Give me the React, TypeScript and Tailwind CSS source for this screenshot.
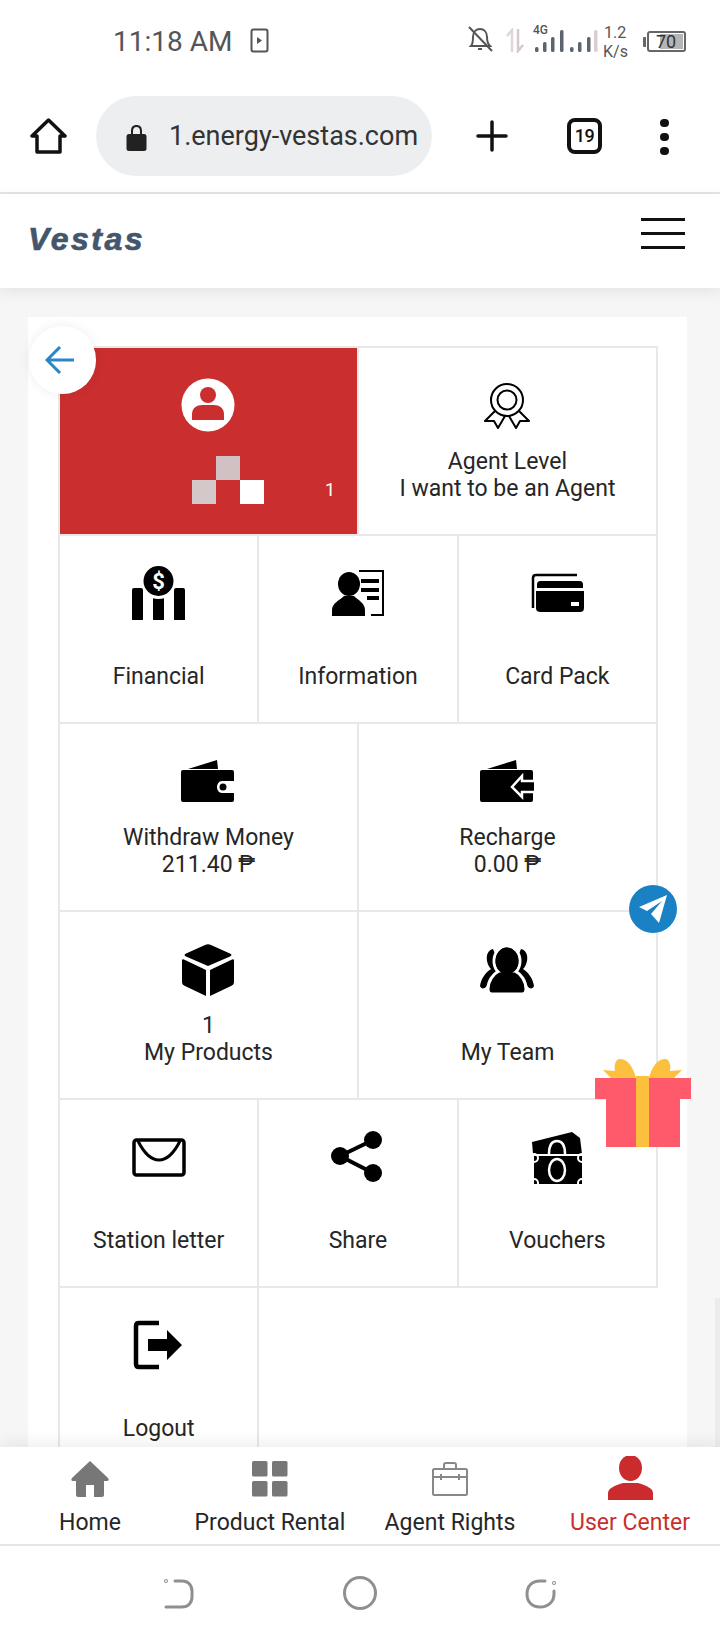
import React from "react";

const S = ({ children, fill = "black" }: { children: React.ReactNode; fill?: string }) => (
  <svg width="54" height="54" viewBox="0 0 54 54" fill={fill}>{children}</svg>
);

const Financial = () => (
  <S>
    <rect x="0" y="22" width="11" height="33" rx="2" />
    <rect x="21" y="31" width="11" height="24" rx="2" />
    <rect x="42" y="22" width="11" height="33" rx="2" />
    <circle cx="26.5" cy="16" r="17" fill="white" />
    <circle cx="26.5" cy="15" r="15" />
    <text x="26.5" y="23" textAnchor="middle" fontSize="22" fontWeight="700" fill="white" fontFamily="Roboto, sans-serif">$</text>
  </S>
);
const Information = () => (
  <S>
    <path d="M28 5H52V49H40" fill="none" stroke="black" strokeWidth="2" />
    <rect x="30" y="13" width="18" height="4" />
    <rect x="30" y="22" width="18" height="4" />
    <rect x="36" y="30" width="12" height="4" />
    <ellipse cx="18" cy="18" rx="11" ry="12" />
    <path d="M1 50V44C1 37 9 34 13 30H23C27 34 34 37 34 44V50Z" />
  </S>
);
const CardPack = () => (
  <S>
    <path d="M3 42V12C3 10 4 9 6 9H47" fill="none" stroke="black" strokeWidth="2.5" />
    <path d="M7 22V19C7 16 8 15 11 15H49C52 15 53 16 53 19V22Z" />
    <path d="M6 25H54V42C54 45 52 46 50 46H11C8 46 6 45 6 42Z" />
    <rect x="41" y="36" width="8" height="4" fill="white" />
  </S>
);
const Wallet = ({ arrow }: { arrow?: boolean }) => (
  <S>
    <path d="M7 15L36 6L37 15Z" />
    <rect x="0" y="16" width="53" height="32" rx="2" />
    {arrow ? (
      <path d="M54 27H42V22L32 33L42 43V38H54" fill="black" stroke="white" strokeWidth="2.5" />
    ) : (
      <>
        <path d="M54 27H41C38 27 36 30 36 33C36 36 38 39 41 39H54Z" fill="white" />
        <circle cx="42" cy="33" r="3.5" />
      </>
    )}
  </S>
);
const Box = () => (
  <S>
    <path d="M24 3C26 2 28 2 30 3L50 12C51 13 50 14 49 14.500L27 24L5 14.500C4 14 3 13 4 12Z" />
    <path d="M1 19C1 17 2 17 4 18L25 28V54L4 44C2 43 1 42 1 40Z" />
    <path d="M53 19C53 17 52 17 50 18L29 28V54L50 44C52 43 53 42 53 40Z" />
  </S>
);
const Team = () => (
  <S>
    <path d="M13 7C8 8 6 13 7 19C8 23 9 25 11 27C5 31 1 37 0 44C1 47 4 47 6 45L12 34L20 24Z" />
    <path d="M41 7C46 8 48 13 47 19C46 23 45 25 43 27C49 31 53 37 54 44C53 47 50 47 48 45L42 34L34 24Z" />
    <ellipse cx="27" cy="19" rx="13" ry="15" stroke="white" strokeWidth="3" />
    <path d="M8 47C8 39 13 32 19 29H35C41 32 46 39 46 47C46 50 45 52 42 52H12C9 52 8 50 8 47Z" stroke="white" strokeWidth="3" />
    <ellipse cx="27" cy="19" rx="11.500" ry="13.500" />
  </S>
);
const Mail = () => (
  <S>
    <rect x="2" y="10" width="50" height="35" rx="2.500" fill="none" stroke="black" strokeWidth="3.500" />
    <path d="M6 11C11 21 18 30 27 30C36 30 43 21 48 11" fill="none" stroke="black" strokeWidth="3" />
  </S>
);
const Share = () => (
  <S>
    <path d="M42 10L9 26L42 43" fill="none" stroke="black" strokeWidth="4" />
    <circle cx="42" cy="10" r="9" />
    <circle cx="9" cy="26" r="9" />
    <circle cx="42" cy="43" r="9" />
  </S>
);
const Vouchers = () => (
  <S>
    <path d="M2 12L42 2L50 8L52 24H3Z" />
    <path d="M4 26H52V54H4Z" />
    <ellipse cx="27" cy="40" rx="8" ry="11" fill="none" stroke="white" strokeWidth="2.500" />
    <path d="M19 24C19 14 23 11 27 11C31 11 35 14 35 24" fill="none" stroke="white" strokeWidth="2.500" />
    <circle cx="4" cy="28" r="4" fill="none" stroke="white" strokeWidth="2" />
    <circle cx="52" cy="28" r="4" fill="none" stroke="white" strokeWidth="2" />
    <circle cx="4" cy="53" r="4" fill="none" stroke="white" strokeWidth="2" />
    <circle cx="52" cy="53" r="4" fill="none" stroke="white" strokeWidth="2" />
  </S>
);
const Logout = () => (
  <S>
    <path d="M27 5H7C5 5 4 6 4 8V46C4 48 5 49 7 49H27" fill="none" stroke="black" strokeWidth="4.500" />
    <path d="M16 21H35V12L50 27L35 42V33H16Z" />
  </S>
);
const Award = () => (
  <S>
    <circle cx="27" cy="22" r="16" fill="none" stroke="black" strokeWidth="2" />
    <circle cx="27" cy="22" r="9.500" fill="none" stroke="black" strokeWidth="2" />
    <path d="M15 33L5 43L14 43L18 50L25 38M39 33L49 43L40 43L36 50L29 38" fill="none" stroke="black" strokeWidth="2" strokeLinejoin="round" />
  </S>
);
const Avatar = () => (
  <S fill="white">
    <circle cx="27" cy="27" r="26.500" />
    <ellipse cx="27" cy="17" rx="8" ry="8" fill="#cb2e2e" />
    <path d="M11 42V36C11 30 16 27 21 27H33C38 27 43 30 43 36V42Z" fill="#cb2e2e" />
  </S>
);

const Cell = ({ span, icon, lines }: { span: 2 | 3; icon: React.ReactNode; lines: string[] }) => (
  <div className={`${span === 3 ? "col-span-3" : "col-span-2"} h-[188px] border-r-2 border-b-2 border-[#e8e8e8] flex flex-col items-center pt-[30px]`}>
    {icon}
    <div className="mt-[16px] h-[54px] flex flex-col justify-end text-center text-[23px] leading-[27px] text-[#262626]">
      {lines.map((l) => (
        <div key={l}>{l}</div>
      ))}
    </div>
  </div>
);

const Peso = "\u20B1";

const NavItem = ({ icon, label, active }: { icon: React.ReactNode; label: string; active?: boolean }) => (
  <div className="flex-1 flex flex-col items-center">
    <div className="h-[62px] w-full flex items-center justify-center pt-[2px]">{icon}</div>
    <div className={`text-[23px] leading-[28px] ${active ? "text-[#c9302c]" : "text-[#262626]"}`}>{label}</div>
  </div>
);

export default function App() {
  return (
    <div className="relative w-[720px] h-[1640px] overflow-hidden flex flex-col bg-white font-['Roboto',sans-serif]">
      {/* status bar */}
      <div className="h-[96px] shrink-0 flex items-start pl-[113px] pr-[34px] pt-[26px] text-[#555]">
        <span className="text-[28px] leading-[32px]">11:18 AM</span>
        <svg className="ml-[18px] mt-[2px]" width="20" height="25" viewBox="0 0 20 25" fill="none">
          <rect x="1.500" y="1.500" width="16" height="22" rx="2" stroke="#555" strokeWidth="2" />
          <path d="M7 9L12 12.500L7 16Z" fill="#555" />
        </svg>
        <div className="ml-auto flex items-start">
          <svg width="25" height="26" viewBox="0 0 25 26" fill="none" stroke="#555" strokeWidth="2">
            <path d="M3 20C5 18 5 15 5 11C5 6 8 3 12 3C16 3 19 6 19 11C19 15 20 18 22 20Z" />
            <path d="M10 23H14" />
            <path d="M1 1L24 25" />
          </svg>
          <svg className="ml-[13px] mt-[2px]" width="18" height="25" viewBox="0 0 18 25" fill="none" stroke="#e2d5d7" strokeWidth="2.500">
            <path d="M6 24V2L1 8" />
            <path d="M12 1V23L17 17" stroke="#d9c8cb" />
          </svg>
          <div className="relative ml-[8px] w-[66px] h-[26px]">
            <span className="absolute left-[1px] -top-[2px] text-[12px] leading-[12px] font-medium text-[#555]">4G</span>
            <svg className="absolute left-0 top-0" width="66" height="26" viewBox="0 0 66 26" fill="#5c6470">
              <rect x="3" y="21" width="3.500" height="5" rx="1.500" />
              <rect x="11" y="16" width="3.500" height="10" rx="1.500" />
              <rect x="19" y="11" width="3.500" height="15" rx="1.500" />
              <rect x="28" y="4" width="3.500" height="22" rx="1.500" />
              <rect x="38" y="21" width="3.500" height="5" rx="1.500" />
              <rect x="46" y="16" width="3.500" height="10" rx="1.500" />
              <rect x="55" y="11" width="3.500" height="15" rx="1.500" />
              <rect x="62" y="4" width="3.500" height="22" rx="1.500" fill="#dccdd0" />
            </svg>
          </div>
          <div className="ml-[5px] -mt-[3px] text-[16px] leading-[19px] text-[#555] w-[26px]">
            <div className="pl-[1px]">1.2</div>
            <div>K/s</div>
          </div>
          <div className="ml-[14px] mt-[5px] flex items-center">
            <div className="w-[3px] h-[10px] bg-[#666] rounded-l-[1px]" />
            <div className="relative ml-[1px] w-[39px] h-[21px] border-2 border-[#666] rounded-[3px] flex">
              <div className="absolute left-[11px] top-[1px] bottom-[1px] right-[1px] bg-[#b5b5b5]" />
              <span className="relative ml-[7px] text-[18px] leading-[17px] text-[#333]">70</span>
            </div>
          </div>
        </div>
      </div>

      {/* browser toolbar */}
      <div className="h-[98px] shrink-0 border-b-2 border-[#e5e5e5] flex items-start pl-[30px]">
        <svg className="mt-[22px]" width="37" height="37" viewBox="0 0 37 37" fill="none" stroke="#111" strokeWidth="3.500" strokeLinejoin="round">
          <path d="M2 18L18.500 2L35 18H30V34H7V18Z" />
        </svg>
        <div className="ml-[29px] w-[336px] h-[80px] rounded-[40px] bg-[#eceef0] flex items-center pl-[30px]">
          <svg className="shrink-0 mt-[2px]" width="21" height="27" viewBox="0 0 21 27" fill="#222">
            <path d="M5 11V7C5 3 7 1 10.500 1C14 1 16 3 16 7V11H14V7C14 5 13 3 10.500 3C8 3 7 5 7 7V11Z" />
            <rect x="0.500" y="10" width="20" height="17" rx="2.500" />
          </svg>
          <span className="ml-[22px] text-[27px] leading-[34px] text-[#333] whitespace-nowrap">1.energy-vestas.com</span>
        </div>
        <svg className="ml-[44px] mt-[24px]" width="32" height="32" viewBox="0 0 32 32" stroke="#111" strokeWidth="3.500" strokeLinecap="round">
          <path d="M16 2V30M2 16H30" />
        </svg>
        <div className="ml-[59px] mt-[22px] w-[35px] h-[36px] border-4 border-[#111] rounded-[8px] flex items-center justify-center text-[18px] font-medium text-[#111] leading-none tracking-[-0.5px]">19</div>
        <div className="ml-[58px] mt-[23px] flex flex-col gap-[6px]">
          {[0, 1, 2].map((i) => (
            <div key={i} className="w-[9px] h-[8px] rounded-full bg-[#111]" />
          ))}
        </div>
      </div>

      {/* site header */}
      <div className="relative z-10 h-[94px] shrink-0 bg-white shadow-[0_4px_14px_rgba(0,0,0,0.08)] flex items-start justify-between pl-[28px] pr-[35px]">
        <span className="mt-[27px] text-[#44566c] text-[32px] leading-[36px] font-bold italic tracking-[2.5px] [-webkit-text-stroke:0.7px_#44566c] font-['Liberation_Sans',sans-serif]">Vestas</span>
        <div className="mt-[24px] w-[44px] flex flex-col gap-[11px]">
          <div className="h-[3px] bg-[#111]" />
          <div className="h-[3px] bg-[#111]" />
          <div className="h-[3px] bg-[#111]" />
        </div>
      </div>

      {/* main */}
      <div className="flex-1 min-h-0 overflow-hidden bg-[#f6f6f6] pl-[28px] pr-[33px] pt-[29px]">
        <div className="bg-white h-[1200px] pl-[30px] pt-[29px]">
          <div className="w-[600px] grid grid-cols-6 border-t-2 border-l-2 border-[#e8e8e8]">
            <div className="col-span-3 h-[188px] border-r-2 border-b-2 border-[#e8e8e8]">
              <div className="h-[186px] bg-[#cb2e2e] flex flex-col">
                <div className="pt-[30px] flex justify-center">
                  <Avatar />
                </div>
                <div className="mt-[24px] ml-[132px] flex items-end">
                  <div className="grid grid-cols-3 w-[72px]">
                    <div className="h-[24px]" />
                    <div className="h-[24px] bg-[#d2c1c2]" />
                    <div className="h-[24px]" />
                    <div className="h-[24px] bg-[#d4c8c8]" />
                    <div className="h-[24px]" />
                    <div className="h-[24px] bg-white" />
                  </div>
                  <span className="ml-[61px] mb-[5px] text-[18px] leading-[18px] text-white">1</span>
                </div>
              </div>
            </div>
            <Cell span={3} icon={<Award />} lines={["Agent Level", "I want to be an Agent"]} />
            <Cell span={2} icon={<Financial />} lines={["Financial"]} />
            <Cell span={2} icon={<Information />} lines={["Information"]} />
            <Cell span={2} icon={<CardPack />} lines={["Card Pack"]} />
            <Cell span={3} icon={<Wallet />} lines={["Withdraw Money", `211.40 ${Peso}`]} />
            <Cell span={3} icon={<Wallet arrow />} lines={["Recharge", `0.00 ${Peso}`]} />
            <Cell span={3} icon={<Box />} lines={["1", "My Products"]} />
            <Cell span={3} icon={<Team />} lines={["My Team"]} />
            <Cell span={2} icon={<Mail />} lines={["Station letter"]} />
            <Cell span={2} icon={<Share />} lines={["Share"]} />
            <Cell span={2} icon={<Vouchers />} lines={["Vouchers"]} />
            <Cell span={2} icon={<Logout />} lines={["Logout"]} />
          </div>
        </div>
      </div>

      {/* bottom nav */}
      <div className="relative z-10 h-[99px] shrink-0 bg-white border-b-2 border-[#e5e5e5] shadow-[0_-6px_14px_rgba(0,0,0,0.06)] flex">
        <NavItem
          label="Home"
          icon={
            <svg width="38" height="36" viewBox="0 0 38 36" fill="#777">
              <path d="M19 0L37 17C38 18 38 20 36 20H33V34C33 35 32 36 31 36H23V24H15V36H7C6 36 5 35 5 34V20H2C0 20 0 18 1 17Z" />
            </svg>
          }
        />
        <NavItem
          label="Product Rental"
          icon={
            <svg width="36" height="36" viewBox="0 0 36 36" fill="#777">
              <rect x="0" y="0" width="15.500" height="15.500" rx="1.500" />
              <rect x="20" y="0" width="15.500" height="15.500" rx="1.500" />
              <rect x="0" y="20" width="15.500" height="15.500" rx="1.500" />
              <rect x="20" y="20" width="15.500" height="15.500" rx="1.500" />
            </svg>
          }
        />
        <NavItem
          label="Agent Rights"
          icon={
            <svg width="36" height="34" viewBox="0 0 36 34" fill="none" stroke="#888" strokeWidth="2">
              <rect x="1" y="7" width="34" height="26" rx="1.500" />
              <path d="M12 7V3C12 2 13 1 14 1H22C23 1 24 2 24 3V7" />
              <path d="M1 15H35M9 12V18M27 12V18" />
            </svg>
          }
        />
        <NavItem
          active
          label="User Center"
          icon={
            <svg className="-mt-[2px]" width="45" height="44" viewBox="0 0 45 44" fill="#cc2b2e">
              <ellipse cx="22.500" cy="12" rx="11.500" ry="13" />
              <path d="M0 44V37C0 32 8 29 15 27H30C37 29 45 32 45 37V44Z" />
            </svg>
          }
        />
      </div>

      {/* system nav */}
      <div className="h-[94px] shrink-0 bg-white relative flex items-start justify-center pt-[30px]">
        <svg className="mt-[3px]" width="30" height="30" viewBox="0 0 30 30" fill="none" stroke="#8f8f8f" strokeWidth="3" strokeLinecap="round">
          <path d="M11 2H18C24 2 28 6 28 12V18C28 24 24 28 18 28H2" />
          <circle cx="2" cy="2" r="0.500" />
        </svg>
        <svg className="ml-[149px]" width="34" height="34" viewBox="0 0 34 34" fill="none" stroke="#8f8f8f" strokeWidth="3">
          <circle cx="17" cy="17" r="15.500" />
        </svg>
        <svg className="ml-[148px] mt-[3px]" width="32" height="30" viewBox="0 0 32 30" fill="none" stroke="#8f8f8f" strokeWidth="3" strokeLinecap="round">
          <path d="M20 2H15C7 2 2 7 2 15C2 23 7 28 15 28C23 28 29 23 29 15V12" />
          <circle cx="29" cy="4" r="0.500" />
        </svg>
      </div>

      {/* overlays */}
      <div className="absolute left-[29px] top-[326px] w-[67px] h-[68px] rounded-full bg-white shadow-[0_0_12px_rgba(0,0,0,0.07)] flex items-center justify-center pr-[5px] z-20">
        <svg width="30" height="28" viewBox="0 0 30 28" fill="none" stroke="#2a86c5" strokeWidth="3">
          <path d="M29 14H3M15 1L2 14L15 27" />
        </svg>
      </div>
      <div className="absolute left-[629px] top-[885px] w-[48px] h-[48px] rounded-full bg-[#1a82c4] flex items-center justify-center z-20">
        <svg width="30" height="30" viewBox="0 0 30 30" fill="white">
          <path d="M29 1L1 13L9 17L24 7L13 20L21 29Z" />
        </svg>
      </div>
      <svg className="absolute left-[595px] top-[1058px] z-20" width="97" height="90" viewBox="0 0 97 90">
        <path d="M41 20C38 8 32 1 25 1C20 1 19 8 20 13L8 12L16 20Z" fill="#fdbf3e" />
        <path d="M54 20C57 8 63 1 70 1C75 1 76 8 75 13L87 12L79 20Z" fill="#fdbf3e" />
        <rect x="0" y="20" width="96" height="21" fill="#ff5a6b" />
        <rect x="11" y="41" width="74" height="48" fill="#ff5a6b" />
        <rect x="41" y="18" width="13" height="71" fill="#fdbf3e" />
      </svg>
      <div className="absolute right-0 top-[1298px] w-[5px] h-[149px] bg-[#ececec] z-0" />
    </div>
  );
}
